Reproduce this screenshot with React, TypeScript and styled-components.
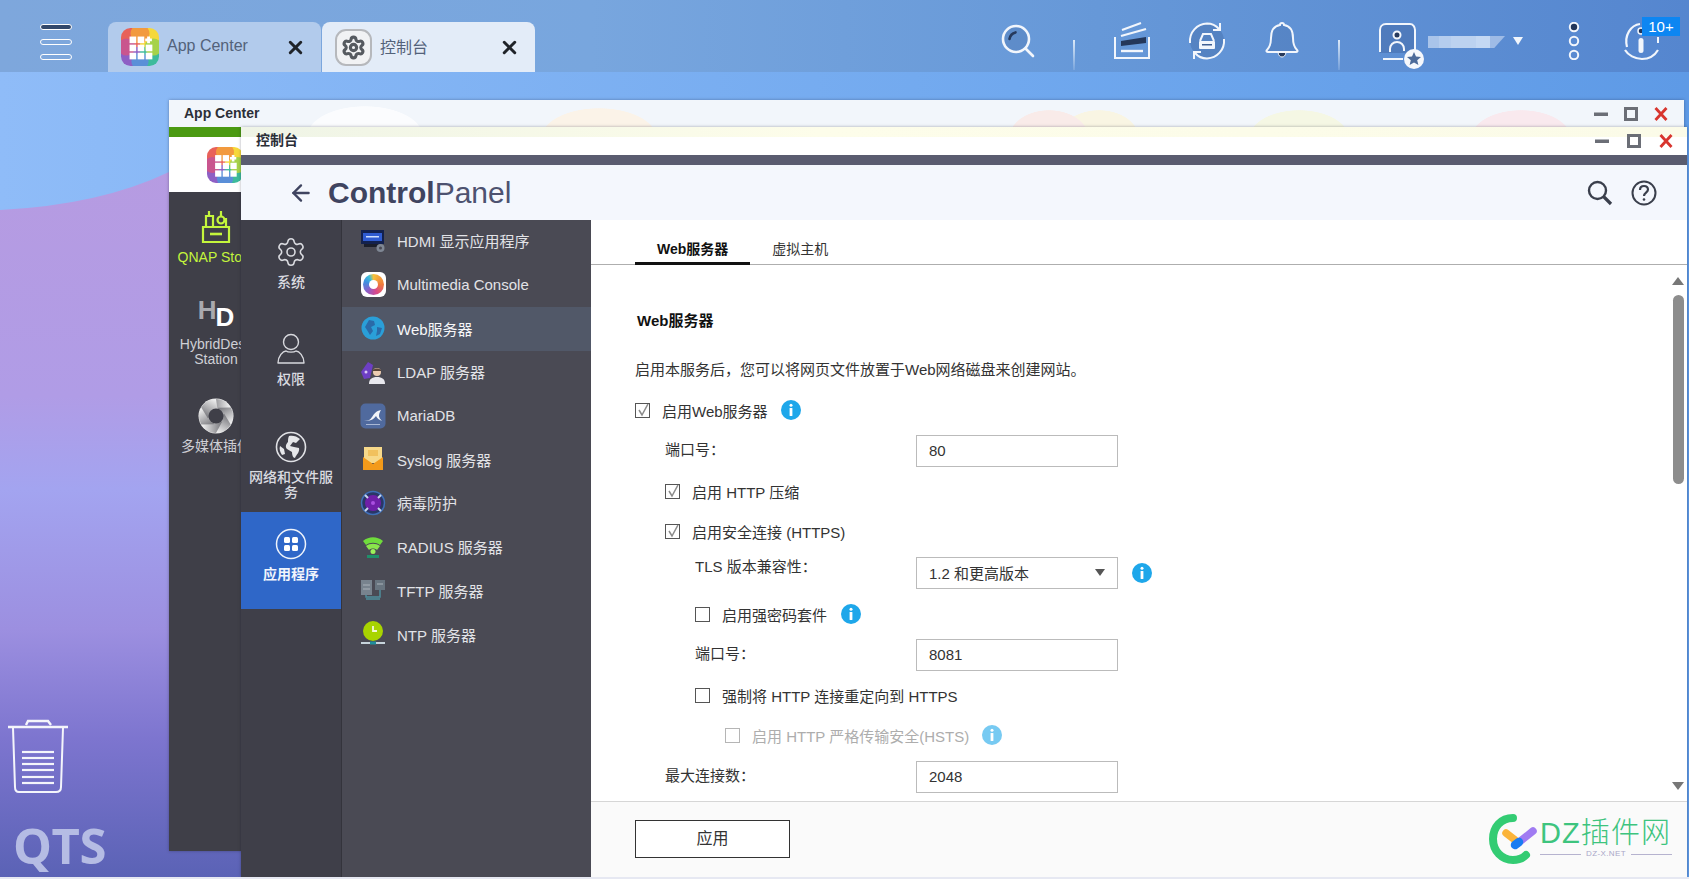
import React from 'react';
import styled, { createGlobalStyle } from 'styled-components';
import { Settings, X, ArrowLeft } from 'lucide-react';

const Global = createGlobalStyle`
  html, body { margin: 0; padding: 0; overflow: hidden; }
  * { box-sizing: border-box; }
  body { font-family: "Liberation Sans", "Noto Sans CJK SC", sans-serif; }
`;

const Page = styled.div`
  position: relative;
  width: 1689px;
  height: 879px;
  overflow: hidden;
  background: #6a62bd;
`;
const WallpaperSvg = styled.svg`
  position: absolute;
  inset: 0;
`;
const BottomEdge = styled.div`
  position: absolute;
  left: 0;
  right: 0;
  bottom: 0;
  height: 2px;
  background: #e6e8f2;
  z-index: 9;
`;

/* top bar */
const TopBar = styled.header`
  position: relative;
  height: 72px;
  display: flex;
  background: linear-gradient(90deg, #7ea7dc 0%, #78a6de 35%, #6698d8 65%, #5586cf 100%);
`;
const Burger = styled.div`
  width: 32px;
  margin: 24px 36px 0 40px;
  display: flex;
  flex-direction: column;
  gap: 9px;
`;
const BurgerBar = styled.span<{ $dark?: boolean }>`
  display: block;
  height: 6px;
  border-radius: 3px;
  border: 1.5px solid #fff;
  background: ${(p) => (p.$dark ? '#33496c' : 'transparent')};
`;
const Tab = styled.div<{ $active?: boolean }>`
  width: 213px;
  height: 50px;
  margin: 22px 1px 0 0;
  padding-left: 13px;
  display: flex;
  align-items: center;
  border-radius: 8px 8px 0 0;
  background: ${(p) => (p.$active ? '#e3ecf8' : '#b2cbec')};
  font-size: 16px;
  color: #53627a;
`;
const TabLabel = styled.span`
  margin-left: 8px;
  flex: 1;
  margin-top: -2px;
`;
const TabClose = styled.span`
  display: flex;
  margin-right: 15px;
  color: #1f2329;
`;
const GearBadge = styled.span`
  width: 37px;
  height: 37px;
  display: flex;
  align-items: center;
  justify-content: center;
  border-radius: 11px;
  border: 2px solid #b6b8bc;
  background: #f1f2f4;
  color: #565a60;
`;
const Tray = styled.div`
  position: absolute;
  left: 0;
  top: 0;
  height: 72px;
  display: flex;
  align-items: flex-start;
`;
const TrayItem = styled.span<{ $x: number; $y: number }>`
  position: absolute;
  left: ${(p) => p.$x}px;
  top: ${(p) => p.$y}px;
  display: flex;
`;
const TrayDivider = styled.span<{ $x: number }>`
  position: absolute;
  left: ${(p) => p.$x}px;
  top: 40px;
  width: 2px;
  height: 30px;
  background: linear-gradient(#dce9f8, rgba(220, 233, 248, 0.15));
`;
const BlurName = styled.span`
  position: absolute;
  left: 1428px;
  top: 36px;
  width: 77px;
  height: 12px;
  clip-path: polygon(0 0, 100% 0, 86% 100%, 0 100%);
  background: linear-gradient(90deg, #a9c4ea 0 14%, #b5cdee 14% 30%, #bcd2f0 30% 62%, #c4d8f3 62% 80%, #9ebbe6 80%);
`;
const Caret = styled.span`
  position: absolute;
  left: 1513px;
  top: 37px;
  width: 0;
  height: 0;
  border-left: 5px solid transparent;
  border-right: 5px solid transparent;
  border-top: 8px solid #f2f6fc;
`;
const Badge = styled.span`
  position: absolute;
  left: 1642px;
  top: 17px;
  width: 38px;
  height: 19px;
  background: #0d86f2;
  color: #fff;
  font-size: 15px;
  line-height: 19px;
  text-align: center;
`;

/* desktop */
const Trash = styled.div`
  position: absolute;
  left: 8px;
  top: 718px;
  display: flex;
`;
const QtsMark = styled.div`
  position: absolute;
  left: 13px;
  top: 816px;
  font-family: "Open Sans", "Liberation Sans", sans-serif;
  font-weight: 700;
  font-size: 49px;
  line-height: 58px;
  letter-spacing: -0.5px;
  color: #b5bce4;
`;

/* windows */
const Window = styled.section<{ $l: number; $t: number; $w: number; $h: number; $z: number }>`
  position: absolute;
  left: ${(p) => p.$l}px;
  top: ${(p) => p.$t}px;
  width: ${(p) => p.$w}px;
  height: ${(p) => p.$h}px;
  z-index: ${(p) => p.$z};
  display: flex;
  flex-direction: column;
  background: #fff;
  box-shadow: 0 0 3px rgba(20, 20, 40, 0.35);
`;
const AppTitle = styled.div`
  height: 27px;
  flex: none;
  display: flex;
  align-items: center;
  padding: 0 8px 2px 15px;
  font-size: 14px;
  font-weight: 700;
  color: #2b2f38;
  background:
    radial-gradient(ellipse 58px 30px at 196px 36px, #fbfcfe 98%, transparent),
    radial-gradient(ellipse 58px 30px at 430px 38px, #fbf3e8 98%, transparent),
    radial-gradient(ellipse 40px 28px at 880px 38px, #f9ebe9 98%, transparent),
    radial-gradient(ellipse 40px 28px at 930px 38px, #f9f5e3 98%, transparent),
    radial-gradient(ellipse 50px 28px at 1130px 38px, #f5f7e4 98%, transparent),
    radial-gradient(ellipse 50px 28px at 1352px 38px, #f9e9ee 98%, transparent),
    #f2f6fb;
`;
const CpTitle = styled.div`
  height: 28px;
  flex: none;
  display: flex;
  align-items: center;
  padding: 0 5px 5px 15px;
  font-size: 14px;
  font-weight: 700;
  color: #2b2f38;
  background: linear-gradient(90deg, #eff4e6, #fdfdea 40%, #fbfbe8) top / 100% 10px no-repeat, #fff;
`;
const TitleText = styled.span`
  flex: 1;
`;
const Ctrl = styled.span<{ $w: number; $drop: number }>`
  width: ${(p) => p.$w}px;
  display: flex;
  justify-content: center;
  margin-top: ${(p) => p.$drop}px;
`;
const GreenBand = styled.div`
  height: 10px;
  flex: none;
  background: #4b9a12;
`;
const AppBody = styled.div`
  flex: 1;
  display: flex;
  flex-direction: column;
  min-height: 0;
`;
const AppLogoBlock = styled.div`
  height: 55px;
  flex: none;
  padding: 10px 0 0 38px;
  background: #fff;
`;
const AppSide = styled.div`
  flex: 1;
  background: #3f3f48;
  padding-top: 17px;
  display: flex;
  flex-direction: column;
  gap: 31px;
`;
const AppItem = styled.div<{ $lime?: boolean }>`
  width: 94px;
  display: flex;
  flex-direction: column;
  align-items: center;
  text-align: center;
  font-size: 14px;
  line-height: 15px;
  white-space: nowrap;
  color: ${(p) => (p.$lime ? '#c4f53c' : '#cfd0d6')};
`;
const AppIconBox = styled.div`
  height: 36px;
  margin-bottom: 5px;
  display: flex;
  align-items: center;
  justify-content: center;
`;
const HdH = styled.span`
  font-size: 26px;
  font-weight: 700;
  color: #a9a9ae;
  line-height: 36px;
  margin-top: -8px;
`;
const HdD = styled.span`
  font-size: 26px;
  font-weight: 700;
  color: #fff;
  line-height: 36px;
  margin: 6px 0 0 -1px;
`;

/* control panel */
const DarkStrip = styled.div`
  height: 10px;
  flex: none;
  background: #5a5c70;
`;
const CpHeader = styled.div`
  height: 55px;
  flex: none;
  display: flex;
  align-items: center;
  padding: 0 30px 0 47px;
  background: #f4f7fd;
  color: #3f4460;
`;
const Brand = styled.div`
  flex: 1;
  margin-left: 14px;
  font-size: 30px;
  line-height: 34px;
  color: #4d5270;
  b { font-weight: 700; color: #3f4460; }
`;
const HeaderTools = styled.div`
  display: flex;
  align-items: center;
  gap: 18px;
  color: #3a3f4c;
`;
const CpBody = styled.div`
  flex: 1;
  min-height: 0;
  display: flex;
`;
const Nav = styled.nav`
  width: 101px;
  flex: none;
  background: #3f3f49;
  border-right: 1px solid #34343c;
`;
const NavItem = styled.div<{ $active?: boolean }>`
  height: 97.33px;
  padding: 14px 2px 0 2px;
  display: flex;
  flex-direction: column;
  align-items: center;
  text-align: center;
  background: ${(p) => (p.$active ? '#2f67c8' : 'transparent')};
  color: ${(p) => (p.$active ? '#f1f5fc' : '#dadbe0')};
  font-size: 14px;
  font-weight: ${(p) => (p.$active ? 700 : 500)};
  line-height: 15px;
`;
const NavIcon = styled.div`
  height: 36px;
  margin-bottom: 5px;
  display: flex;
  align-items: center;
`;
const List = styled.div`
  width: 249px;
  flex: none;
  background: #4a4a54;
`;
const ListRow = styled.div<{ $active?: boolean }>`
  height: 43.7px;
  padding: 0 0 2px 18px;
  display: flex;
  align-items: center;
  gap: 11px;
  font-size: 15px;
  background: ${(p) => (p.$active ? '#515868' : 'transparent')};
  color: ${(p) => (p.$active ? '#f7f7f9' : '#e2e3e7')};
`;
const ListIcon = styled.span`
  width: 26px;
  height: 26px;
  flex: none;
  display: flex;
  align-items: center;
  justify-content: center;
`;
const Ring = styled.span`
  width: 25px;
  height: 25px;
  border-radius: 6px;
  background: #fff;
  display: flex;
  align-items: center;
  justify-content: center;
`;
const RingInner = styled.span`
  width: 21px;
  height: 21px;
  border-radius: 50%;
  background: conic-gradient(#f6c23c, #ef7a3c 25%, #d8488e 45%, #8d5fc8 62%, #3f8fe0 80%, #3fc0d8 92%, #f6c23c);
  display: flex;
  align-items: center;
  justify-content: center;
  &::after {
    content: '';
    width: 9px;
    height: 9px;
    border-radius: 50%;
    background: #fff;
  }
`;

const Pane = styled.div`
  position: relative;
  flex: 1;
  min-width: 0;
  display: flex;
  flex-direction: column;
  background: #fff;
`;
const TabStrip = styled.div`
  height: 45px;
  flex: none;
  display: flex;
  padding-left: 44px;
  border-bottom: 1px solid #aeaeae;
  font-size: 14px;
`;
const PageTab = styled.div<{ $active?: boolean }>`
  padding: 21px 22px 0;
  height: 45px;
  line-height: 16px;
  color: ${(p) => (p.$active ? '#111' : '#333')};
  font-weight: ${(p) => (p.$active ? 700 : 400)};
  border-bottom: ${(p) => (p.$active ? '3px solid #111' : 'none')};
`;
const Form = styled.div`
  flex: 1;
  min-height: 0;
  overflow: hidden;
  padding-left: 44px;
  font-size: 15px;
  color: #333;
`;
const SectionTitle = styled.h2`
  margin: 36px 0 0 2px;
  height: 40px;
  line-height: 40px;
  font-size: 15px;
  font-weight: 700;
  color: #111;
`;
const Desc = styled.p`
  margin: 0;
  height: 58px;
  line-height: 57px;
`;
const CheckRow = styled.div<{ $indent?: number; $mt?: number; $muted?: boolean }>`
  height: 24px;
  padding-bottom: 2px;
  margin: ${(p) => p.$mt ?? 0}px 0 0 ${(p) => p.$indent ?? 0}px;
  display: flex;
  align-items: center;
  color: ${(p) => (p.$muted ? '#adadad' : '#333')};
`;
const Box = styled.span<{ $muted?: boolean }>`
  width: 15px;
  height: 15px;
  flex: none;
  margin-right: 12px;
  display: flex;
  border: 1px solid ${(p) => (p.$muted ? '#b5b5b5' : '#555')};
`;
const FieldRow = styled.div<{ $indent: number; $mt: number }>`
  height: 32px;
  margin: ${(p) => p.$mt}px 0 0 ${(p) => p.$indent}px;
  display: flex;
`;
const FieldLabel = styled.label<{ $indent: number; $lift?: number }>`
  width: ${(p) => 281 - p.$indent}px;
  line-height: 30px;
  margin-top: ${(p) => -(p.$lift ?? 0)}px;
`;
const TextInput = styled.input`
  width: 202px;
  height: 32px;
  padding: 0 12px 2px;
  border: 1px solid #bbb;
  font: inherit;
  color: #333;
  outline: none;
`;
const SelectBox = styled.div`
  width: 202px;
  height: 32px;
  padding: 0 12px 2px;
  display: flex;
  align-items: center;
  justify-content: space-between;
  border: 1px solid #bbb;
`;
const SelectCaret = styled.span`
  width: 0;
  height: 0;
  border-left: 5px solid transparent;
  border-right: 5px solid transparent;
  border-top: 7px solid #555;
`;
const InfoWrap = styled.span<{ $ml: number; $muted?: boolean }>`
  display: flex;
  align-self: center;
  margin-left: ${(p) => p.$ml}px;
  opacity: ${(p) => (p.$muted ? 0.6 : 1)};
`;
const ScrollRail = styled.div`
  position: absolute;
  right: 0;
  top: 45px;
  bottom: 76px;
  width: 16px;
`;
const ScrollArrow = styled.span<{ $down?: boolean }>`
  position: absolute;
  left: 1px;
  ${(p) => (p.$down ? 'bottom: 11px;' : 'top: 12px;')}
  width: 0;
  height: 0;
  border-left: 6.5px solid transparent;
  border-right: 6.5px solid transparent;
  ${(p) => (p.$down ? 'border-top: 8px solid #777;' : 'border-bottom: 8px solid #777;')}
`;
const ScrollThumb = styled.span`
  position: absolute;
  left: 2px;
  top: 30px;
  width: 11px;
  height: 189px;
  border-radius: 6px;
  background: #8d8d8d;
`;
const Footer = styled.div`
  position: relative;
  height: 76px;
  flex: none;
  padding: 18px 0 0 44px;
  border-top: 1px solid #d6d6d6;
  background: #fafafa;
`;
const ApplyButton = styled.button`
  width: 155px;
  height: 38px;
  padding: 0 0 5px;
  background: #fff;
  border: 1.5px solid #333;
  font: inherit;
  font-size: 16px;
  color: #333;
`;
const Watermark = styled.div`
  position: absolute;
  right: 15px;
  top: 12px;
  display: flex;
  gap: 1px;
`;
const WmColumn = styled.div`
  padding-top: 3px;
`;
const WmText = styled.div`
  width: 132px;
  color: #3dc47e;
  font-size: 29px;
  line-height: 32px;
  white-space: nowrap;
  font-weight: 300;
  letter-spacing: 1.1px;
`;
const WmSub = styled.div`
  display: flex;
  align-items: center;
  gap: 5px;
  font-size: 8px;
  line-height: 10px;
  letter-spacing: 0.4px;
  color: #a9a6c8;
  font-weight: 400;
  &::before, &::after {
    content: '';
    flex: 1;
    height: 1px;
    background: #b6b3cf;
  }
`;

/* drawings */
const AppLogo = ({ size }: { size: number }) => (
  <svg width={size} height={size} viewBox="0 0 40 40">
    <defs>
      <clipPath id={`al${size}`}>
        <rect width="40" height="40" rx="10" />
      </clipPath>
    </defs>
    <g clipPath={`url(#al${size})`}>
      <rect width="20" height="20" fill="#e8615a" />
      <rect x="20" width="20" height="20" fill="#f6d83a" />
      <rect y="20" width="20" height="20" fill="#8e5fc4" />
      <rect x="20" y="20" width="20" height="20" fill="#3dbb9c" />
      <circle cx="20" cy="6" r="10" fill="#f29a3e" />
      <circle cx="34" cy="20" r="9" fill="#a6d24a" />
      <circle cx="20" cy="35" r="9" fill="#5a8fd8" />
      <circle cx="6" cy="20" r="9" fill="#c9558e" />
    </g>
    {[9, 17.5, 26].map((y) =>
      [9, 17.5, 26].map((x) =>
        x === 26 && y === 9 ? (
          <path key={`${x}${y}`} d="M29 9v7M25.5 12.5h7" stroke="#fff" strokeWidth="3" />
        ) : (
          <rect key={`${x}${y}`} x={x} y={y} width="7" height="7" fill="#fff" />
        ),
      ),
    )}
  </svg>
);

const TabX = () => <X size={21} strokeWidth={3.4} />;

const SearchTray = () => (
  <svg width="36" height="36" viewBox="0 0 36 36" fill="none">
    <circle cx="16" cy="16" r="13" fill="rgba(45,80,135,.18)" stroke="#f2f6fc" strokeWidth="2.6" />
    <path d="M26 26l7 7" stroke="#f2f6fc" strokeWidth="2.6" strokeLinecap="round" />
    <path d="M9.5 16c.6-3.6 2.6-5.8 6-6.6" stroke="#26395c" strokeWidth="2.6" strokeLinecap="round" />
  </svg>
);
const LayersTray = () => (
  <svg width="38" height="38" viewBox="0 0 38 38" fill="none">
    <path d="M2 15v21h34V15" stroke="#f2f6fc" strokeWidth="2" />
    <path d="M8 29h22" stroke="#f2f6fc" strokeWidth="2.4" />
    <path d="M8 24l25-3v-6L8 19z" fill="#24375a" />
    <path d="M8 14l25-7" stroke="#f2f6fc" strokeWidth="2.2" />
    <path d="M9 8l19-7" stroke="#f2f6fc" strokeWidth="2" />
  </svg>
);
const SyncTray = () => (
  <svg width="40" height="40" viewBox="0 0 40 40" fill="none">
    <circle cx="20" cy="20" r="17" fill="rgba(45,80,135,.25)" />
    <path d="M3 22C2 11 10 3 20 2.500c5 0 9 2 12 5.500" stroke="#f2f6fc" strokeWidth="2" />
    <path d="M37 18c1 11-7 19-17 19.500-5 0-9-2-12-5.500" stroke="#f2f6fc" strokeWidth="2" />
    <path d="M33 2v7h-7M7 38v-7h7" stroke="#f2f6fc" strokeWidth="2" />
    <path d="M13 20l3-7h8l3 7" stroke="#f2f6fc" strokeWidth="2" fill="none" />
    <rect x="12" y="20" width="16" height="8" rx="1" fill="#f2f6fc" />
    <rect x="15" y="23" width="10" height="1.500" fill="#3f5f92" />
  </svg>
);
const BellTray = () => (
  <svg width="34" height="38" viewBox="0 0 34 38" fill="none">
    <path d="M17 2c1 0 2 1 2 2 7 1 9 7 9 13 0 6 1 9 4 12 1 1 .5 2-1 2H3c-1.500 0-2-1-1-2 3-3 4-6 4-12 0-6 2-12 9-13 0-1 1-2 2-2z" fill="rgba(45,80,135,.18)" stroke="#f2f6fc" strokeWidth="2" />
    <path d="M13 31.500c.5 3 2 4.500 4 4.500s3.500-1.500 4-4.500z" fill="#26395c" stroke="#f2f6fc" strokeWidth="1" />
  </svg>
);
const UserTray = () => (
  <svg width="48" height="50" viewBox="0 0 48 50" fill="none">
    <path d="M2 31V8c0-3 2-6 6-6h24c3 0 5 3 5 6v23" fill="rgba(45,80,135,.3)" />
    <path d="M2 30V8c0-3 2-6 6-6h24c3 0 5 3 5 6v20" stroke="#f2f6fc" strokeWidth="2" />
    <path d="M5 37h20" stroke="#f2f6fc" strokeWidth="2" />
    <circle cx="19" cy="13" r="3.500" fill="#26395c" stroke="#f2f6fc" strokeWidth="2" />
    <path d="M12 30v-3c0-4 3-7 7-7s7 3 7 7v2" stroke="#f2f6fc" strokeWidth="2" />
    <circle cx="36" cy="37" r="10" fill="#f6f8fc" />
    <path d="M36 30l2 4.600 5 .4-3.800 3.200 1.200 4.800-4.400-2.600-4.400 2.600 1.200-4.800L29 35l5-.4z" fill="#4d6b9a" />
  </svg>
);
const DotsTray = () => (
  <svg width="12" height="38" viewBox="0 0 12 38" fill="none">
    <circle cx="6" cy="5" r="4.200" fill="#22365a" stroke="#f2f6fc" strokeWidth="2" />
    <circle cx="6" cy="19" r="4.200" stroke="#f2f6fc" strokeWidth="2" />
    <circle cx="6" cy="33" r="4.200" stroke="#f2f6fc" strokeWidth="2" />
  </svg>
);
const InfoTray = () => (
  <svg width="40" height="40" viewBox="0 0 40 40" fill="none">
    <path d="M5 26C2 14 9 4 18 3" stroke="#f2f6fc" strokeWidth="2.200" />
    <path d="M3 29c3 5 10 9 17 9s13-4 16-9" stroke="#f2f6fc" strokeWidth="2.200" />
    <circle cx="19" cy="10" r="3" fill="#22365a" stroke="#f2f6fc" strokeWidth="1.500" />
    <rect x="16.500" y="17" width="5" height="15" rx="2.500" fill="#f2f6fc" />
    <path d="M36 16v6" stroke="#f2f6fc" strokeWidth="2" />
  </svg>
);
const TrashIcon = () => (
  <svg width="60" height="76" viewBox="0 0 60 76" fill="none" stroke="#f4f5fb">
    <path d="M18 7l2-4h20l3 4" strokeWidth="2.400" />
    <path d="M0 9h60" strokeWidth="2.400" />
    <path d="M5 10l2 59c0 3 1 5 4 5h37c3 0 5-2 5-5l2-59" strokeWidth="2" />
    {[34, 40, 46, 52, 59, 65].map((y) => (
      <path key={y} d={`M14 ${y}h32`} strokeWidth="2.200" />
    ))}
  </svg>
);
const ApertureIcon = () => (
  <svg width="36" height="36" viewBox="0 0 36 36">
    <defs>
      <linearGradient id="blade" x1="0" x2="1" y1="0" y2="0">
        <stop offset="0" stopColor="#77777c" />
        <stop offset="1" stopColor="#f6f6f6" />
      </linearGradient>
    </defs>
    <circle cx="18" cy="18" r="17.500" fill="#e8e8e8" />
    {[0, 60, 120, 180, 240, 300].map((a) => (
      <path key={a} d="M18 1A17 17 0 0 1 32.700 9.500L22 18 12 12z" fill="url(#blade)" transform={`rotate(${a} 18 18)`} />
    ))}
    <circle cx="18" cy="18" r="7.500" fill="#3f3f48" />
  </svg>
);
const Minus = () => (
  <svg width="14" height="14" viewBox="0 0 14 14">
    <rect x="0" y="5.500" width="14" height="3.500" fill="#6b6e76" />
  </svg>
);
const Maxi = () => (
  <svg width="14" height="14" viewBox="0 0 14 14" fill="none">
    <rect x="1.500" y="1.500" width="11" height="11" stroke="#6b6e76" strokeWidth="3" />
  </svg>
);
const CloseX = () => (
  <svg width="14" height="14" viewBox="0 0 14 14">
    <path d="M1.500 1l11 12M12.500 1l-11 12" stroke="#d8352e" strokeWidth="2.800" />
  </svg>
);
const Info = () => (
  <svg width="20" height="20" viewBox="0 0 20 20">
    <circle cx="10" cy="10" r="10" fill="#1ea7ea" />
    <circle cx="10" cy="5.200" r="1.500" fill="#fff" />
    <rect x="8.600" y="8" width="2.800" height="8" rx="0.600" fill="#fff" />
  </svg>
);
const Check = () => (
  <svg width="13" height="13" viewBox="0 0 13 13" fill="none">
    <path d="M3 6l3 5 6-11" stroke="#8b8b8b" strokeWidth="1.500" />
  </svg>
);
const QnapStore = () => (
  <svg width="30" height="34" viewBox="0 0 30 34" fill="none" stroke="#c4f53c" strokeWidth="2.200">
    <path d="M2 17h26v15H2z" />
    <path d="M9 24h12" strokeWidth="2.600" />
    <path d="M5 16V6h7v10M8 6V1" />
    <circle cx="20" cy="10" r="3.500" />
    <path d="M20 6V1M25 16V8" />
  </svg>
);
const UserNav = () => (
  <svg width="32" height="32" viewBox="0 0 32 32" fill="none" stroke="#d8d9de" strokeWidth="1.400">
    <circle cx="16" cy="9" r="7.500" />
    <path d="M3 30c0-7 5-12 8-12 2 1.500 8 1.500 10 0 3 0 8 5 8 12z" strokeLinejoin="round" />
  </svg>
);
const GlobeNav = () => (
  <svg width="32" height="32" viewBox="0 0 32 32" fill="none">
    <circle cx="16" cy="16" r="14.500" stroke="#e0e1e5" strokeWidth="1.600" />
    <path d="M14 5c3-1 8 0 11 3l-4 4-3-1-3 4 4 1 5 1c1 4-3 7-4 10-2 0-3-3-3-6l-5-3c-2-2-1-5 1-7 0-2 0-4 1-6zM5 15l4 3 1 5-3 1c-2-3-3-6-2-9z" fill="#e6e7ea" />
  </svg>
);
const AppsNav = () => (
  <svg width="32" height="32" viewBox="0 0 32 32" fill="none">
    <circle cx="16" cy="16" r="14.500" stroke="#eef3fb" strokeWidth="1.500" />
    <rect x="9" y="9" width="6" height="6" rx="1.500" fill="#fff" />
    <rect x="17" y="9" width="6" height="6" rx="1.500" fill="#fff" />
    <rect x="9" y="17" width="6" height="6" rx="1.500" fill="#fff" />
    <rect x="17" y="17" width="6" height="6" rx="1.500" fill="#fff" />
  </svg>
);
const HdmiIcon = () => (
  <svg width="26" height="26" viewBox="0 0 26 26">
    <rect x="1" y="2" width="23" height="14" fill="#13214e" />
    <rect x="3" y="5" width="19" height="8" fill="#2f5bd0" />
    <rect x="6" y="8" width="13" height="1.500" fill="#cfe0ff" />
    <rect x="4" y="16" width="15" height="3" fill="#1b1e2a" />
    <circle cx="20.500" cy="20" r="4" fill="#7f8794" />
    <circle cx="20.500" cy="20" r="1.500" fill="#4a4a54" />
  </svg>
);
const WebIcon = () => (
  <svg width="26" height="26" viewBox="0 0 26 26">
    <circle cx="13" cy="13" r="11.500" fill="#2a9fd8" />
    <path d="M9 5l5 1 1 4-4 2 2 4-3 4-3-5-2-3zM17 12l5 1-2 6-4 2 1-5z" fill="#2a6aa8" />
  </svg>
);
const LdapIcon = () => (
  <svg width="26" height="26" viewBox="0 0 26 26">
    <path d="M1 13l7-10 5 3-3 13-6 1z" fill="#6d3fc4" />
    <circle cx="6" cy="13" r="1.500" fill="#d9c8f5" />
    <circle cx="17" cy="13" r="4" fill="#eccdb2" />
    <path d="M9 25c0-5 3-7 8-7s8 2 8 7z" fill="#e8e8ee" />
    <path d="M13 11c2-2 6-2 8 0v1h-8z" fill="#5a4638" />
  </svg>
);
const MariaIcon = () => (
  <svg width="26" height="26" viewBox="0 0 26 26">
    <rect x="0.500" y="0.500" width="25" height="25" rx="5" fill="#506a9e" />
    <path d="M4 18c4 0 6-1 8-4 2-3 4-6 9-7-1 2-2 3-2 6 0 1 1 3 3 5-3-1-5-3-6-5-2 3-5 5-12 5z" fill="#f2f4f8" />
    <rect x="6" y="21" width="14" height="1" fill="#a9b7d4" />
  </svg>
);
const SyslogIcon = () => (
  <svg width="26" height="26" viewBox="0 0 26 26">
    <rect x="4" y="1" width="18" height="16" fill="#f7d98a" />
    <rect x="8" y="4" width="10" height="6" fill="#f1c15e" />
    <path d="M3 11l10 7 10-7v13H3z" fill="#f39a1a" />
  </svg>
);
const VirusIcon = () => (
  <svg width="26" height="26" viewBox="0 0 26 26">
    <circle cx="13" cy="13" r="11.500" fill="#2a3766" stroke="#3f6fb8" strokeWidth="1.500" />
    <circle cx="13" cy="13" r="8" fill="#6f1fa8" />
    <path d="M5 5l3 3M21 5l-3 3M5 21l3-3M21 21l-3-3" stroke="#c8d4ea" strokeWidth="2" />
    <circle cx="13" cy="13" r="2" fill="#a94fe0" />
  </svg>
);
const RadiusIcon = () => (
  <svg width="26" height="26" viewBox="0 0 26 26" fill="none">
    <path d="M3 7c6-5 14-5 20 0l-3 4c-4-3-10-3-14 0z" fill="#6fdc3c" />
    <path d="M6 12c4-3 10-3 14 0l-3 4c-2-2-6-2-8 0z" fill="#8ae64c" />
    <circle cx="13" cy="17.500" r="2.500" fill="#9cf05a" />
    <rect x="7" y="21" width="12" height="3" fill="#1f8f6a" />
  </svg>
);
const TftpIcon = () => (
  <svg width="26" height="26" viewBox="0 0 26 26" fill="none">
    <rect x="1" y="3" width="11" height="15" fill="#78838e" />
    <rect x="15" y="3" width="10" height="10" fill="#68747f" />
    <path d="M3 8h7M3 12h7M17 7h6" stroke="#aab2ba" />
    <path d="M20 13v7H6v-2M6 22h14" stroke="#4f8e9c" strokeWidth="1.500" />
  </svg>
);
const NtpIcon = () => (
  <svg width="26" height="26" viewBox="0 0 26 26" fill="none">
    <circle cx="13" cy="10" r="10" fill="#a8d400" />
    <path d="M13 5v5h4" stroke="#f4f9d8" strokeWidth="1.800" />
    <path d="M1 22h24" stroke="#c7d4dc" strokeWidth="2" />
    <path d="M10 22h6" stroke="#1f8f9c" strokeWidth="3" />
  </svg>
);
const SearchHeader = () => (
  <svg width="26" height="26" viewBox="0 0 26 26" fill="none" stroke="#3a3f4c">
    <circle cx="10.500" cy="10.500" r="8.500" strokeWidth="2.400" />
    <path d="M16.500 16.500L24 24" strokeWidth="3.200" />
  </svg>
);
const HelpIcon = () => (
  <svg width="26" height="26" viewBox="0 0 26 26" fill="none" stroke="#3a3f4c">
    <circle cx="13" cy="13" r="11.500" strokeWidth="2" />
    <path d="M9 10c0-2.500 1.800-4 4-4s4 1.400 4 3.600c0 3-4 3.200-4 6.400" strokeWidth="2.200" />
    <circle cx="13" cy="19.500" r="1.300" fill="#3a3f4c" stroke="none" />
  </svg>
);
const WmLogo = () => (
  <svg width="50" height="50" viewBox="0 0 50 50" fill="none">
    <path d="M24 4C12 4 4 13 4 25s9 21 20 21c5 0 10-2 13-5" stroke="#33cc73" strokeWidth="8" strokeLinecap="round" />
    <path d="M17 19l9 7" stroke="#fbb43a" strokeWidth="7.500" strokeLinecap="round" />
    <path d="M29 29l15-12" stroke="#a07bf2" strokeWidth="7.500" strokeLinecap="round" />
    <path d="M26 31l4-3" stroke="#1a7cf2" strokeWidth="8.500" strokeLinecap="round" />
  </svg>
);

const listRows: { icon: React.ReactNode; label: string; active?: boolean }[] = [
  { icon: <HdmiIcon />, label: 'HDMI 显示应用程序' },
  { icon: <Ring><RingInner /></Ring>, label: 'Multimedia Console' },
  { icon: <WebIcon />, label: 'Web服务器', active: true },
  { icon: <LdapIcon />, label: 'LDAP 服务器' },
  { icon: <MariaIcon />, label: 'MariaDB' },
  { icon: <SyslogIcon />, label: 'Syslog 服务器' },
  { icon: <VirusIcon />, label: '病毒防护' },
  { icon: <RadiusIcon />, label: 'RADIUS 服务器' },
  { icon: <TftpIcon />, label: 'TFTP 服务器' },
  { icon: <NtpIcon />, label: 'NTP 服务器' },
];

export default function App() {
  return (
    <Page>
      <Global />
      <WallpaperSvg width="1689" height="879" viewBox="0 0 1689 879">
        <defs>
          <linearGradient id="sky" x1="0" x2="1" y1="0" y2="0">
            <stop offset="0" stopColor="#8fbcf8" />
            <stop offset="0.6" stopColor="#70a8ee" />
            <stop offset="1" stopColor="#5e9ae6" />
          </linearGradient>
          <linearGradient id="hill" x1="0" x2="0" y1="0" y2="1">
            <stop offset="0" stopColor="#b89be0" />
            <stop offset="0.38" stopColor="#b09ce6" />
            <stop offset="0.5" stopColor="#a3a4f0" />
            <stop offset="0.68" stopColor="#9c8fe0" />
            <stop offset="0.82" stopColor="#7d75cf" />
            <stop offset="1" stopColor="#5a62b5" />
          </linearGradient>
        </defs>
        <rect width="1689" height="879" fill="url(#sky)" />
        <path d="M0 210Q100 205 169 172Q240 135 320 100V879H0Z" fill="url(#hill)" />
      </WallpaperSvg>

      <TopBar>
        <Burger>
          <BurgerBar $dark />
          <BurgerBar />
          <BurgerBar />
        </Burger>
        <Tab>
          <AppLogo size={38} />
          <TabLabel>App Center</TabLabel>
          <TabClose><TabX /></TabClose>
        </Tab>
        <Tab $active>
          <GearBadge><Settings size={25} strokeWidth={3} /></GearBadge>
          <TabLabel>控制台</TabLabel>
          <TabClose><TabX /></TabClose>
        </Tab>
        <Tray>
          <TrayItem $x={1000} $y={23}><SearchTray /></TrayItem>
          <TrayDivider $x={1073} />
          <TrayItem $x={1113} $y={22}><LayersTray /></TrayItem>
          <TrayItem $x={1187} $y={21}><SyncTray /></TrayItem>
          <TrayItem $x={1265} $y={21}><BellTray /></TrayItem>
          <TrayDivider $x={1338} />
          <TrayItem $x={1378} $y={22}><UserTray /></TrayItem>
          <BlurName />
          <Caret />
          <TrayItem $x={1568} $y={22}><DotsTray /></TrayItem>
          <TrayItem $x={1622} $y={21}><InfoTray /></TrayItem>
          <Badge>10+</Badge>
        </Tray>
      </TopBar>

      <Trash><TrashIcon /></Trash>
      <QtsMark>QTS</QtsMark>

      <Window $l={169} $t={100} $w={1515} $h={751} $z={1}>
        <AppTitle>
          <TitleText>App Center</TitleText>
          <Ctrl $w={30} $drop={2}><Minus /></Ctrl>
          <Ctrl $w={30} $drop={2}><Maxi /></Ctrl>
          <Ctrl $w={30} $drop={2}><CloseX /></Ctrl>
        </AppTitle>
        <GreenBand />
        <AppBody>
          <AppLogoBlock><AppLogo size={36} /></AppLogoBlock>
          <AppSide>
            <AppItem $lime>
              <AppIconBox><QnapStore /></AppIconBox>
              QNAP Store
            </AppItem>
            <AppItem>
              <AppIconBox><HdH>H</HdH><HdD>D</HdD></AppIconBox>
              HybridDesk
              <br />
              Station
            </AppItem>
            <AppItem>
              <AppIconBox><ApertureIcon /></AppIconBox>
              多媒体插件
            </AppItem>
          </AppSide>
        </AppBody>
      </Window>

      <Window $l={241} $t={127} $w={1446} $h={750} $z={2}>
        <CpTitle>
          <TitleText>控制台</TitleText>
          <Ctrl $w={32} $drop={5}><Minus /></Ctrl>
          <Ctrl $w={32} $drop={5}><Maxi /></Ctrl>
          <Ctrl $w={32} $drop={5}><CloseX /></Ctrl>
        </CpTitle>
        <DarkStrip />
        <CpHeader>
          <ArrowLeft size={26} strokeWidth={2.2} />
          <Brand><b>Control</b>Panel</Brand>
          <HeaderTools>
            <SearchHeader />
            <HelpIcon />
          </HeaderTools>
        </CpHeader>
        <CpBody>
          <Nav>
            <NavItem>
              <NavIcon><Settings size={32} strokeWidth={1.2} /></NavIcon>
              系统
            </NavItem>
            <NavItem>
              <NavIcon><UserNav /></NavIcon>
              权限
            </NavItem>
            <NavItem>
              <NavIcon><GlobeNav /></NavIcon>
              网络和文件服务
            </NavItem>
            <NavItem $active>
              <NavIcon><AppsNav /></NavIcon>
              应用程序
            </NavItem>
          </Nav>
          <List>
            {listRows.map((r) => (
              <ListRow key={r.label} $active={r.active}>
                <ListIcon>{r.icon}</ListIcon>
                {r.label}
              </ListRow>
            ))}
          </List>
          <Pane>
            <TabStrip>
              <PageTab $active>Web服务器</PageTab>
              <PageTab>虚拟主机</PageTab>
            </TabStrip>
            <Form>
              <SectionTitle>Web服务器</SectionTitle>
              <Desc>启用本服务后，您可以将网页文件放置于Web网络磁盘来创建网站。</Desc>
              <CheckRow>
                <Box><Check /></Box>启用Web服务器
                <InfoWrap $ml={13}><Info /></InfoWrap>
              </CheckRow>
              <FieldRow $indent={30} $mt={12}>
                <FieldLabel $indent={30}>端口号：</FieldLabel>
                <TextInput readOnly value="80" />
              </FieldRow>
              <CheckRow $indent={30} $mt={13}>
                <Box><Check /></Box>启用 HTTP 压缩
              </CheckRow>
              <CheckRow $indent={30} $mt={16}>
                <Box><Check /></Box>启用安全连接 (HTTPS)
              </CheckRow>
              <FieldRow $indent={60} $mt={13}>
                <FieldLabel $indent={60} $lift={5}>TLS 版本兼容性：</FieldLabel>
                <SelectBox>1.2 和更高版本<SelectCaret /></SelectBox>
                <InfoWrap $ml={14}><Info /></InfoWrap>
              </FieldRow>
              <CheckRow $indent={60} $mt={14}>
                <Box />启用强密码套件
                <InfoWrap $ml={14}><Info /></InfoWrap>
              </CheckRow>
              <FieldRow $indent={60} $mt={12}>
                <FieldLabel $indent={60}>端口号：</FieldLabel>
                <TextInput readOnly value="8081" />
              </FieldRow>
              <CheckRow $indent={60} $mt={13}>
                <Box />强制将 HTTP 连接重定向到 HTTPS
              </CheckRow>
              <CheckRow $indent={90} $mt={16} $muted>
                <Box $muted />启用 HTTP 严格传输安全(HSTS)
                <InfoWrap $ml={13} $muted><Info /></InfoWrap>
              </CheckRow>
              <FieldRow $indent={30} $mt={13}>
                <FieldLabel $indent={30}>最大连接数：</FieldLabel>
                <TextInput readOnly value="2048" />
              </FieldRow>
            </Form>
            <ScrollRail>
              <ScrollArrow />
              <ScrollThumb />
              <ScrollArrow $down />
            </ScrollRail>
            <Footer>
              <ApplyButton>应用</ApplyButton>
              <Watermark>
                <WmLogo />
                <WmColumn>
                  <WmText>DZ插件网</WmText>
                  <WmSub>DZ-X.NET</WmSub>
                </WmColumn>
              </Watermark>
            </Footer>
          </Pane>
        </CpBody>
      </Window>
      <BottomEdge />
    </Page>
  );
}
